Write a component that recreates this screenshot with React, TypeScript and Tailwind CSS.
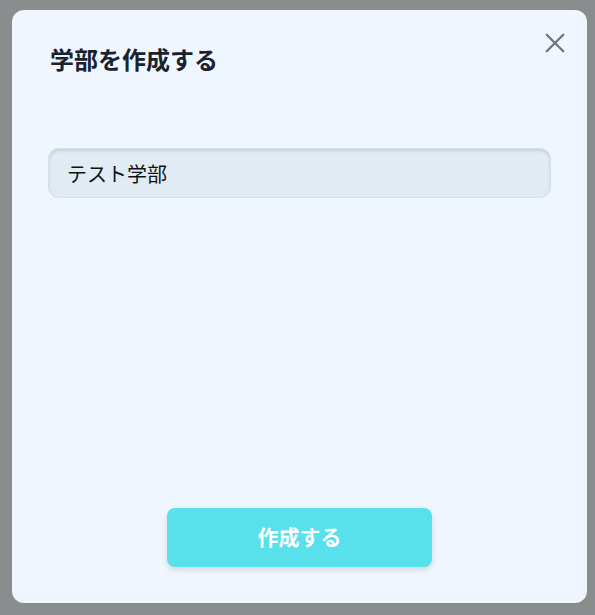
import React, { useState } from "react";

const font = { fontFamily: '"Noto Sans", "Noto Sans CJK JP", sans-serif' };

const CreateFacultyModal: React.FC = () => {
  const [name, setName] = useState("テスト学部");

  return (
    <div className="relative flex h-[593px] w-[575px] flex-col rounded-xl bg-[#eff6fd] px-[37px] pt-[34px] pb-[36px]">
      <button className="absolute right-[21px] top-[22px] text-[#6b7280]" aria-label="close">
        <svg width="22" height="22" viewBox="0 0 24 24" fill="none" stroke="currentColor" strokeWidth="2.4" strokeLinecap="round">
          <path d="M3 3 L21 21 M21 3 L3 21" />
        </svg>
      </button>
      <h2 className="pl-[1px] text-[24px] font-bold leading-[32px] text-[#1a2230]">学部を作成する</h2>
      <input
        value={name}
        onChange={(e) => setName(e.target.value)}
        className="mt-[73px] h-[48px] w-full rounded-[10px] bg-[#e1ebf3] px-[18px] text-[20px] text-[#111] shadow-[inset_0_2px_3px_rgba(0,0,0,0.12)] outline-none ring-1 ring-[#d6e0e8]"
        style={font}
      />
      <div className="mt-auto flex justify-center">
        <button className="h-[59px] w-[265px] rounded-lg bg-[#58e1ec] text-[21px] font-bold text-white shadow-[0_3px_6px_rgba(0,0,0,0.12)]">
          作成する
        </button>
      </div>
    </div>
  );
};

export default function App() {
  return (
    <div className="flex h-[615px] w-[595px] items-start bg-[#8a8d8d] pl-[12px] pt-[10px]" style={font}>
      <CreateFacultyModal />
    </div>
  );
}
